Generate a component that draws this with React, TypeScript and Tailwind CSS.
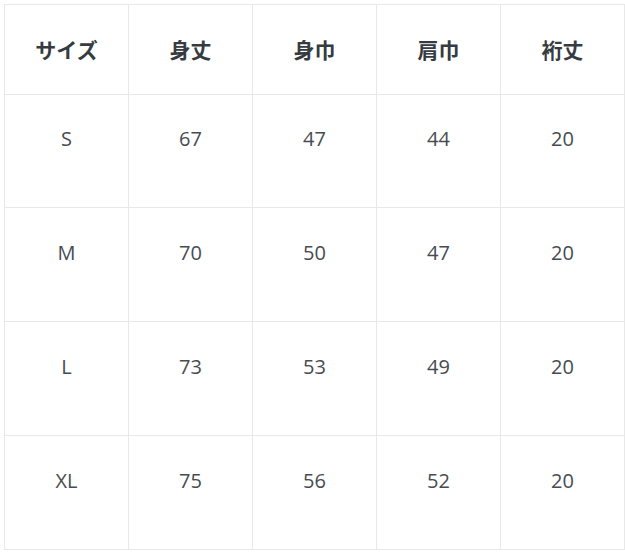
import React from "react";

const headers = ["サイズ", "身丈", "身巾", "肩巾", "裄丈"];
const rows = [
  ["S", "67", "47", "44", "20"],
  ["M", "70", "50", "47", "20"],
  ["L", "73", "53", "49", "20"],
  ["XL", "75", "56", "52", "20"],
];
const rowHeights = ["h-[113px]", "h-[114px]", "h-[114px]", "h-[114px]"];

export default function App() {
  return (
    <div className="w-[625px] h-[557px] bg-white">
      <div
        className="ml-[4px] pt-[4px] w-[621px]"
        style={{ fontFamily: '"Open Sans", "Noto Sans CJK JP", sans-serif' }}
      >
        <div className="grid grid-cols-[repeat(5,124px)] border-l border-t border-[#e8e8e8]">
          {headers.map((h) => (
            <div
              key={h}
              className="h-[90px] border-r border-b border-[#e8e8e8] flex items-center justify-center text-[21px] font-bold text-[#353b41]"
              style={{ fontFamily: '"Noto Sans CJK JP", sans-serif' }}
            >
              {h}
            </div>
          ))}
          {rows.map((r, i) =>
            r.map((c, j) => (
              <div
                key={`${i}-${j}`}
                className={`${rowHeights[i]} border-r border-b border-[#e8e8e8] flex items-center justify-center pb-[24px] text-[20px] text-[#474c52]`}
              >
                {c}
              </div>
            ))
          )}
        </div>
      </div>
    </div>
  );
}
